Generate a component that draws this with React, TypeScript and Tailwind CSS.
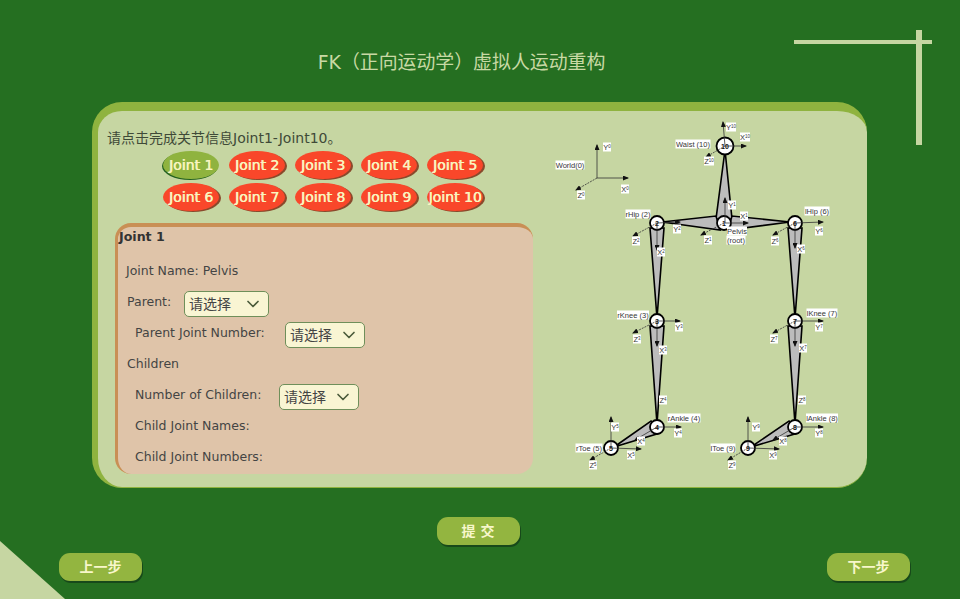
import { ChevronDown } from 'lucide-react';

const JOINTS = ['Joint 1', 'Joint 2', 'Joint 3', 'Joint 4', 'Joint 5', 'Joint 6', 'Joint 7', 'Joint 8', 'Joint 9', 'Joint 10'];

type Pt = [number, number];

// skeleton nodes, in page coordinates (the svg's viewBox starts at 550,111)
const NODES: { n: string; at: Pt; r: number }[] = [
  { n: '10', at: [725, 146], r: 8.5 },
  { n: '1', at: [724, 223], r: 7 },
  { n: '2', at: [657, 223], r: 7 },
  { n: '6', at: [795, 223], r: 7 },
  { n: '3', at: [657, 321], r: 7 },
  { n: '7', at: [795, 321], r: 7 },
  { n: '4', at: [657, 427], r: 7 },
  { n: '8', at: [795, 427], r: 7 },
  { n: '5', at: [611, 448], r: 7 },
  { n: '9', at: [748, 448], r: 7 },
];

const BONES: Pt[][] = [
  [[725, 150], [716, 219], [732, 219]],
  [[662, 222], [716, 216], [720, 230]],
  [[790, 222], [732, 216], [728, 230]],
  [[650, 228], [664, 228], [657, 318]],
  [[788, 228], [802, 228], [795, 318]],
  [[650, 326], [664, 326], [657, 424]],
  [[788, 326], [802, 326], [795, 424]],
  [[651, 421], [660, 433], [614, 447]],
  [[789, 421], [798, 433], [751, 447]],
];

// axes: from, to, dashed
const AXES: { a: Pt; b: Pt; dash?: boolean }[] = [
  { a: [597, 178], b: [597, 145] },
  { a: [597, 178], b: [628, 178] },
  { a: [597, 178], b: [576, 190], dash: true },
  { a: [725, 146], b: [723, 122] },
  { a: [725, 146], b: [746, 146] },
  { a: [725, 146], b: [706, 157], dash: true },
  { a: [725, 223], b: [725, 198] },
  { a: [725, 223], b: [748, 223] },
  { a: [724, 223], b: [701, 235], dash: true },
  { a: [657, 223], b: [680, 222] },
  { a: [657, 223], b: [657, 250] },
  { a: [657, 223], b: [633, 236], dash: true },
  { a: [795, 223], b: [823, 222] },
  { a: [795, 223], b: [795, 248] },
  { a: [795, 223], b: [773, 235], dash: true },
  { a: [657, 321], b: [680, 321] },
  { a: [657, 321], b: [657, 346] },
  { a: [657, 321], b: [633, 333], dash: true },
  { a: [795, 321], b: [823, 321] },
  { a: [795, 321], b: [795, 346] },
  { a: [795, 321], b: [773, 333], dash: true },
  { a: [657, 427], b: [681, 427] },
  { a: [657, 427], b: [635, 440] },
  { a: [795, 427], b: [823, 427] },
  { a: [795, 427], b: [773, 440] },
  { a: [611, 448], b: [611, 417] },
  { a: [611, 448], b: [641, 449] },
  { a: [611, 448], b: [590, 460], dash: true },
  { a: [748, 448], b: [748, 417] },
  { a: [748, 448], b: [779, 449] },
  { a: [748, 448], b: [728, 460], dash: true },
];

// little boxed captions: text, small index, centre
const CAPTIONS: { t: string; s?: string; at: Pt; w: number }[] = [
  { t: 'World(0)', at: [570, 165], w: 29 },
  { t: 'Y', s: '0', at: [607, 147], w: 8 },
  { t: 'X', s: '0', at: [625, 189], w: 8 },
  { t: 'Z', s: '0', at: [581, 195], w: 8 },
  { t: 'Waist (10)', at: [693, 144], w: 35 },
  { t: 'Y', s: '10', at: [731, 127], w: 10 },
  { t: 'X', s: '10', at: [745, 137], w: 10 },
  { t: 'Z', s: '10', at: [709, 161], w: 10 },
  { t: 'Y', s: '1', at: [732, 205], w: 8 },
  { t: 'X', s: '1', at: [744, 216], w: 8 },
  { t: 'Z', s: '1', at: [708, 240], w: 8 },
  { t: 'Pelvis', at: [737, 231], w: 20 },
  { t: '(root)', at: [736, 240], w: 19 },
  { t: 'rHip (2)', at: [638, 214], w: 25 },
  { t: 'Y', s: '2', at: [677, 229], w: 8 },
  { t: 'X', s: '2', at: [661, 252], w: 8 },
  { t: 'Z', s: '2', at: [636, 241], w: 8 },
  { t: 'lHip (6)', at: [817, 211], w: 25 },
  { t: 'Y', s: '6', at: [819, 231], w: 8 },
  { t: 'X', s: '6', at: [801, 249], w: 8 },
  { t: 'Z', s: '6', at: [775, 241], w: 8 },
  { t: 'rKnee (3)', at: [633, 315], w: 32 },
  { t: 'Y', s: '3', at: [679, 327], w: 8 },
  { t: 'X', s: '3', at: [663, 350], w: 8 },
  { t: 'Z', s: '3', at: [637, 339], w: 8 },
  { t: 'lKnee (7)', at: [822, 313], w: 31 },
  { t: 'Y', s: '7', at: [819, 327], w: 8 },
  { t: 'X', s: '7', at: [803, 348], w: 8 },
  { t: 'Z', s: '7', at: [774, 339], w: 8 },
  { t: 'rAnkle (4)', at: [684, 418], w: 33 },
  { t: 'Y', s: '4', at: [678, 433], w: 8 },
  { t: 'X', s: '4', at: [641, 441], w: 8 },
  { t: 'Z', s: '4', at: [663, 400], w: 8 },
  { t: 'lAnkle (8)', at: [822, 418], w: 32 },
  { t: 'Y', s: '8', at: [819, 433], w: 8 },
  { t: 'X', s: '8', at: [783, 441], w: 8 },
  { t: 'Z', s: '8', at: [802, 400], w: 8 },
  { t: 'rToe (5)', at: [589, 448], w: 27 },
  { t: 'Y', s: '5', at: [615, 427], w: 8 },
  { t: 'X', s: '5', at: [631, 455], w: 8 },
  { t: 'Z', s: '5', at: [593, 465], w: 8 },
  { t: 'lToe (9)', at: [723, 448], w: 25 },
  { t: 'Y', s: '9', at: [756, 427], w: 8 },
  { t: 'X', s: '9', at: [773, 455], w: 8 },
  { t: 'Z', s: '9', at: [732, 465], w: 8 },
];

function Skeleton() {
  return (
    <svg width="300" height="368" viewBox="550 111 300 368" className="shrink-0">
      <defs>
        <marker id="tip" markerWidth="6" markerHeight="5" refX="5" refY="2.5" orient="auto" markerUnits="userSpaceOnUse">
          <path d="M0 0L6 2.5L0 5Z" fill="#111" />
        </marker>
      </defs>
      {BONES.map((b, i) => (
        <polygon key={i} points={b.map((p) => p.join(',')).join(' ')} fill="#bcbcbc" stroke="#000" strokeWidth="1.6" />
      ))}
      {NODES.map((j) => (
        <circle key={j.n} cx={j.at[0]} cy={j.at[1]} r={j.r} fill="#fff" stroke="#000" strokeWidth="1.8" />
      ))}
      {NODES.map((j) => (
        <text key={j.n} x={j.at[0]} y={j.at[1] + 2.5} textAnchor="middle" fontSize="7" fontWeight="700" fontFamily="'Liberation Sans', sans-serif" fill="#111">
          {j.n}
        </text>
      ))}
      {AXES.map((x, i) => (
        <line key={i} x1={x.a[0]} y1={x.a[1]} x2={x.b[0]} y2={x.b[1]} stroke="#333" strokeWidth="0.8" strokeDasharray={x.dash ? '2 1' : undefined} markerEnd="url(#tip)" />
      ))}
      {CAPTIONS.map((c, i) => (
        <g key={i}>
          <rect x={c.at[0] - c.w / 2} y={c.at[1] - 4.5} width={c.w} height="9" fill="#fff" />
          <text x={c.at[0]} y={c.at[1] + 2.5} textAnchor="middle" fontSize="7.5" fontFamily="'Liberation Sans', sans-serif" fill="#222" opacity="0.9">
            {c.t}
            {c.s && (
              <tspan fontSize="4.5" dy="-2">
                {c.s}
              </tspan>
            )}
          </text>
        </g>
      ))}
    </svg>
  );
}

function Pick({ className }: { className: string }) {
  return (
    <div className={`h-[26px] mt-[3px] shrink-0 flex items-center justify-between pl-1 pr-[5px] rounded-[5px] border-[1.5px] border-[#6f8f5a] bg-[#f9f5d3] text-[14px] text-[#444] ${className}`}>
      请选择
      <ChevronDown className="w-5 h-5 text-[#4a5a3a]" strokeWidth={2} />
    </div>
  );
}

function NavButton({ label, className = '' }: { label: string; className?: string }) {
  return (
    <button className={`w-[83px] h-[28px] rounded-[11px] bg-[#93b540] shadow-[1px_2px_0_#17491a] text-[#f8f7cb] text-[14px] font-bold ${className}`}>
      {label}
    </button>
  );
}

export default function App() {
  return (
    <div
      className="relative w-[960px] h-[599px] overflow-hidden bg-[#256f21] flex flex-col text-[#444]"
      style={{ fontFamily: "'DejaVu Sans', 'Noto Sans CJK SC', sans-serif" }}
    >
      {/* corner decorations */}
      <div className="absolute left-[794px] top-[40px] w-[138px] h-[4px] bg-[#c6d6a2]" />
      <div className="absolute left-[916px] top-[30px] w-[6px] h-[115px] bg-[#c6d6a2]" />
      <div className="absolute left-0 top-[541px] w-[65px] h-[58px] bg-[#c6d6a2] [clip-path:polygon(0_0,100%_100%,0_100%)]" />

      <h1 className="h-[102px] pt-[48px] pr-[37px] text-center text-[18.9px] leading-[28px] font-normal text-[#c8d9a4]">
        FK（正向运动学）虚拟人运动重构
      </h1>

      {/* main panel */}
      <div className="ml-[92px] w-[775px] h-[386px] rounded-[30px] border-t-[9px] border-l-[6px] border-b-[1px] border-[#8fb33f] bg-[#c6d6a2] flex">
        <div className="w-[452px] shrink-0 pl-[9px] pt-[17px]">
          <p className="text-[14px] leading-[20px] text-[#3f4a38]">请点击完成关节信息Joint1-Joint10。</p>

          <div className="ml-[56px] mt-[3px] w-[330px] grid grid-cols-5 gap-y-[4px]">
            {JOINTS.map((j, i) => (
              <button
                key={j}
                className={`w-[56px] h-[28px] rounded-[50%] text-[14px] leading-none text-[#f9f5c0] [text-shadow:0.6px_0_0_#f9f5c0] ${
                  i === 0 ? 'bg-[#8fb33f] shadow-[-1px_1px_0_#22601f]' : 'bg-[#f9472a] shadow-[2px_1px_0_#8a4a2c]'
                }`}
              >
                {j}
              </button>
            ))}
          </div>

          {/* joint detail card */}
          <div className="ml-[8px] mt-[12px] w-[418px] h-[251px] rounded-[16px] border-t-4 border-l-[3px] border-[#c98f55] bg-[#dfc4a9] text-[12.5px]">
            <h2 className="pl-[1px] pt-[2px] text-[12.6px] leading-[16px] font-bold text-[#333]">Joint 1</h2>
            <div className="flex flex-col mt-[11px]">
              <div className="h-[31px] pl-[8px] flex items-center">Joint Name: Pelvis</div>
              <div className="h-[31px] pl-[9px] flex items-center">
                <span className="w-[57px]">Parent:</span>
                <Pick className="w-[85px]" />
              </div>
              <div className="h-[31px] pl-[17px] flex items-center">
                <span className="w-[150px]">Parent Joint Number:</span>
                <Pick className="w-[80px]" />
              </div>
              <div className="h-[31px] pl-[9px] flex items-center">Children</div>
              <div className="h-[31px] pl-[17px] flex items-center">
                <span className="w-[144px]">Number of Children:</span>
                <Pick className="w-[80px]" />
              </div>
              <div className="h-[31px] pl-[17px] flex items-center">Child Joint Names:</div>
              <div className="h-[31px] pl-[17px] flex items-center">Child Joint Numbers:</div>
            </div>
          </div>
        </div>
        <Skeleton />
      </div>

      {/* footer buttons */}
      <div className="mt-[29px] flex justify-center">
        <NavButton label="提 交" className="ml-[-4px]" />
      </div>
      <div className="mt-[8px] pl-[59px] pr-[50px] flex justify-between">
        <NavButton label="上一步" />
        <NavButton label="下一步" />
      </div>
    </div>
  );
}
